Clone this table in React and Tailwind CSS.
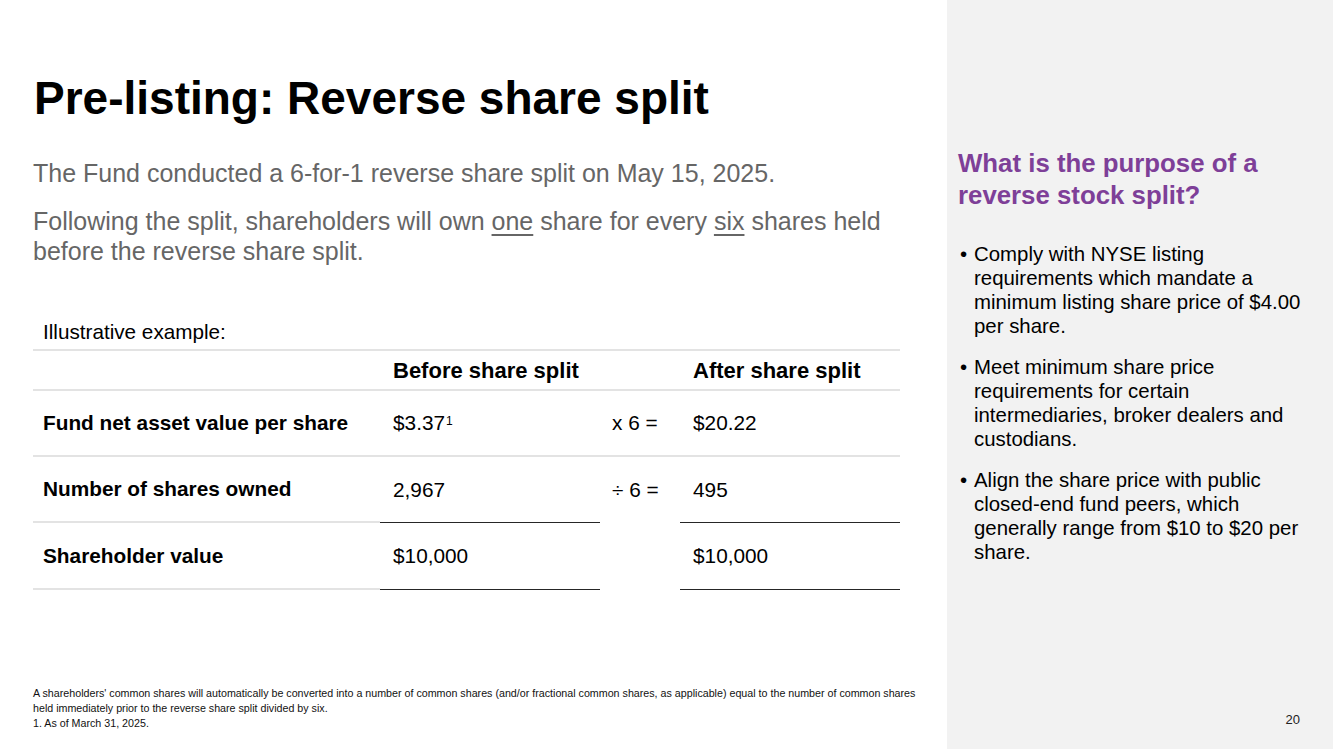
import React from "react";

const gray = "border-b-2 border-[#e3e3e3]";
const dark = "border-b-[1.5px] border-[#262626]";

const Cell = ({ className = "", children }) => (
    <div className={"flex items-center " + className}>{children}</div>
);

export default function App() {
    return (
        <div className="w-[1333px] h-[749px] flex bg-white text-black font-['Liberation_Sans',Arial,sans-serif] overflow-hidden">
            <section className="w-[947px] flex flex-col pl-[33px] pt-[75px]">
                <h1 className="text-[46px] leading-[46px] font-bold ml-[1px]">Pre-listing: Reverse share split</h1>

                <div className="mt-[37px] text-[25px] leading-[30px] text-[#666666] w-[880px]">
                    <p>The Fund conducted a 6-for-1 reverse share split on May 15, 2025.</p>
                    <p className="mt-[18px]">
                        Following the split, shareholders will own <span className="underline underline-offset-[4px] decoration-[1.5px]">one</span> share for every <span className="underline underline-offset-[4px] decoration-[1.5px]">six</span> shares held before the reverse share split.
                    </p>
                </div>

                <p className="mt-[54px] pl-[10px] text-[20.7px] leading-[24px]">Illustrative example:</p>

                <div className="mt-[5px] w-[867px] grid grid-cols-[347px_220px_80px_220px] text-[20.8px] border-t-2 border-[#e3e3e3]">
                    <Cell className={"h-[40px] " + gray} />
                    <Cell className={"h-[40px] pl-[13px] font-bold text-[22px] " + gray}>Before share split</Cell>
                    <Cell className={"h-[40px] " + gray} />
                    <Cell className={"h-[40px] pl-[13px] font-bold text-[22px] " + gray}>After share split</Cell>

                    <Cell className={"h-[66px] pl-[10px] font-bold " + gray}>Fund net asset value per share</Cell>
                    <Cell className={"h-[66px] pl-[13px] " + gray}>
                        $3.37<sup className="text-[12px] relative -top-[2px] ml-px">1</sup>
                    </Cell>
                    <Cell className={"h-[66px] pl-[12px] " + gray}>x 6 =</Cell>
                    <Cell className={"h-[66px] pl-[13px] " + gray}>$20.22</Cell>

                    <Cell className={"h-[66px] pl-[10px] font-bold " + gray}>Number of shares owned</Cell>
                    <Cell className={"h-[66px] pl-[13px] " + dark}>2,967</Cell>
                    <Cell className="h-[66px] pl-[12px]">÷ 6 =</Cell>
                    <Cell className={"h-[66px] pl-[13px] " + dark}>495</Cell>

                    <Cell className={"h-[67px] pl-[10px] font-bold " + gray}>Shareholder value</Cell>
                    <Cell className={"h-[67px] pl-[13px] " + dark}>$10,000</Cell>
                    <Cell className="h-[67px]" />
                    <Cell className={"h-[67px] pl-[13px] " + dark}>$10,000</Cell>
                </div>

                <div className="mt-auto pb-[18px] text-[10.7px] leading-[15px] text-[#111] w-[885px]">
                    <p>
                        A shareholders' common shares will automatically be converted into a number of common shares (and/or fractional common shares, as applicable) equal to the number of common shares held immediately prior to the reverse share split divided by six.
                    </p>
                    <p>1. As of March 31, 2025.</p>
                </div>
            </section>

            <aside className="flex-1 bg-[#f2f2f2] flex flex-col pl-[11px] pr-[16px] pt-[147px]">
                <h2 className="text-[25.8px] leading-[32px] font-bold text-[#7e3f98]">
                    What is the purpose of a<br />reverse stock split?
                </h2>
                <ul className="mt-[31px] text-[20.4px] leading-[24px] text-black flex flex-col gap-[17px]">
                    <li className="flex">
                        <span className="w-[16px] shrink-0 pl-[2px]">•</span>
                        <span>Comply with NYSE listing requirements which mandate a minimum listing share price of $4.00 per share.</span>
                    </li>
                    <li className="flex">
                        <span className="w-[16px] shrink-0 pl-[2px]">•</span>
                        <span>Meet minimum share price requirements for certain intermediaries, broker dealers and custodians.</span>
                    </li>
                    <li className="flex">
                        <span className="w-[16px] shrink-0 pl-[2px]">•</span>
                        <span>Align the share price with public closed-end fund peers, which generally range from $10 to $20 per share.</span>
                    </li>
                </ul>
                <p className="mt-auto pb-[21px] self-end pr-[17px] text-[13px] leading-[16px] text-[#222]">20</p>
            </aside>
        </div>
    );
}
